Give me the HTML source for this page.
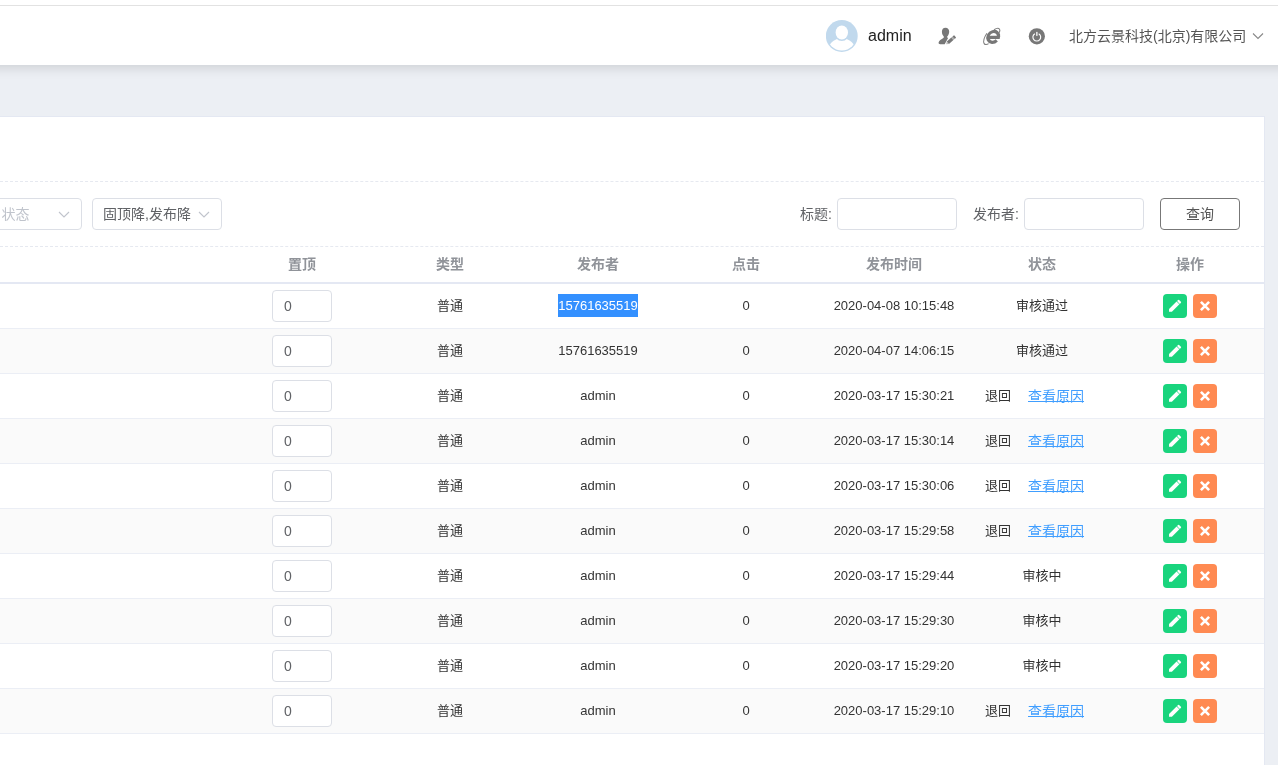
<!DOCTYPE html>
<html lang="zh-CN">
<head>
<meta charset="utf-8">
<title>信息管理</title>
<style>
*{box-sizing:border-box;margin:0;padding:0}
html,body{width:1278px;height:765px;overflow:hidden}
body{-webkit-font-smoothing:antialiased;position:relative;background:#eceff4;font-family:"Liberation Sans","Noto Sans CJK SC",sans-serif;color:#333;font-size:14px}
.top{will-change:transform;position:absolute;left:-40px;top:0;width:1358px;height:65px;padding-left:40px;background:#fff;box-shadow:0 2px 12px rgba(0,0,0,.15)}
.top>*{margin-left:40px}
.top .line{position:absolute;left:0;top:5px;width:1278px;height:1px;background:#e2e2e2}
.avatar{position:absolute;left:826.2px;top:20.2px}
.uname{position:absolute;left:868px;top:26px;font-size:16px;line-height:20px;color:#222}
.hic{position:absolute}
.corp{position:absolute;left:1069px;top:26px;font-size:14px;line-height:20px;color:#555;white-space:nowrap}
.chev{position:absolute}
.panel{will-change:transform;position:absolute;left:-1px;top:116px;width:1266px;height:660px;background:#fff;border:1px solid #e4e8f2}
.dash{position:absolute;left:0;width:1264px;height:0;border-top:1px dashed #e6e9f0}
.select{position:absolute;top:81px;height:32px;border:1px solid #dcdfe6;border-radius:4px;background:#fff;font-size:14px;line-height:30px;color:#606266;white-space:nowrap}
.lab{position:absolute;top:87px;font-size:14px;line-height:20px;color:#606266;white-space:nowrap}
.tin{position:absolute;top:81px;width:120px;height:32px;border:1px solid #dcdfe6;border-radius:4px;background:#fff}
.qbtn{position:absolute;left:1160px;top:81px;width:80px;height:32px;border:1px solid #777;border-radius:4px;background:#fff;font-size:14px;line-height:30px;text-align:center;color:#555}
table{position:absolute;left:0;top:130px;width:1264px;border-collapse:separate;border-spacing:0;table-layout:fixed;font-size:13px;color:#333}
th{height:37px;font-size:14px;font-weight:bold;color:#909399;text-align:center;border-bottom:2px solid #e4e8f3;padding-bottom:4px}
td{height:45px;text-align:center;border-bottom:1px solid #ebeef5;white-space:nowrap;vertical-align:middle}
tr.s td{background:#fafafa}
td.l{text-align:left;padding-left:17px}
.inp{display:inline-block;width:60px;height:32px;border:1px solid #dcdfe6;border-radius:4px;background:#fff;text-align:left;padding-left:11px;line-height:30px;font-size:14px;color:#606266;vertical-align:middle;position:relative;top:0px}
.sel{background:#3390ff;color:#fff;display:inline-block;height:23px;line-height:23px}
i{font-style:normal;position:relative;display:inline-block}
i.c{top:-2px}
i.n{top:-1px}
.bk{margin-right:17px}
.lk{color:#409eff;text-decoration:underline;font-size:14px;text-underline-offset:-0.4px;text-decoration-thickness:1px;text-decoration-skip-ink:none;position:relative;top:1px}
.b{display:inline-block;width:24px;height:24px;border-radius:4px;vertical-align:middle}
.b.g{background:#19d47d;margin-right:6px}
.b.o{background:#ff8a52}
.ic{display:block;width:24px;height:24px}
</style>
</head>
<body>
<div class="top">
  <div class="line"></div>
  <svg class="avatar" width="32" height="32" viewBox="0 0 32 32"><defs><clipPath id="avc"><circle cx="15.8" cy="16" r="14.5"/></clipPath></defs><circle cx="15.8" cy="16" r="15.9" fill="#c1d9ed"/><ellipse cx="15.8" cy="31.3" rx="13.9" ry="13" fill="#fff" clip-path="url(#avc)"/><ellipse cx="15.8" cy="12.5" rx="7.8" ry="8.6" fill="#c1d9ed"/><ellipse cx="15.8" cy="12.5" rx="6.2" ry="7" fill="#fff"/></svg>
  <div class="uname">admin</div>
  <svg class="hic" style="left:930px;top:22px" width="36" height="28" viewBox="0 0 36 28"><g fill="#777"><path d="M15.5 5.7 C17.9 5.7 19.3 7.4 19.2 9.8 C19.1 12 18.2 13.6 17.2 14.5 L17.2 15.4 L18.1 16.1 L14.7 22.3 L10.2 22.3 C9 22.3 8.5 21.6 8.6 20.6 C8.8 18.6 11.2 17.4 13.7 15.7 L13.8 14.5 C12.7 13.5 11.9 11.9 11.9 9.8 C11.9 7.3 13.2 5.7 15.5 5.7 Z"/><g transform="translate(16.1 22.3) rotate(-41.3)"><path d="M0 0 L2.4 -1.6 L2.4 1.6 Z" fill="#bdbdbd"/><rect x="2.4" y="-1.6" width="5.9" height="3.2"/><rect x="8.3" y="-1.6" width="1.6" height="3.2" fill="#a8a8a8"/><rect x="9.9" y="-1.6" width="2.1" height="3.2" rx="0.5"/></g></g></svg>
  <svg class="hic" style="left:974px;top:22px" width="36" height="28" viewBox="0 0 36 28"><path d="M12.9 11.2 C10.4 15 9 19.6 10.2 21.6 C11 22.9 13 22.7 14.6 21.6 M20 7.8 C22.3 6.3 24.6 5.9 25.5 7.2 C26.1 8 25.9 9.4 25.3 10.8" fill="none" stroke="#808080" stroke-width="1.1"/><g fill="none" stroke="#777" stroke-width="3.2" transform="translate(19.2 14.9) skewX(-8) translate(-19.2 -14.9)"><path d="M24.5 14.9 A5.3 5.4 0 1 0 23.26 18.37"/><path d="M14 15.4 L26 15.4"/></g></svg>
  <svg class="hic" style="left:1018px;top:22px" width="36" height="28" viewBox="0 0 36 28"><circle cx="18.85" cy="14.35" r="8.1" fill="#777"/><path d="M16.9 11.7 A3.9 3.9 0 1 0 20.7 11.7" stroke="#fff" stroke-width="1.15" fill="none"/><rect x="18.05" y="9.9" width="1.6" height="4" fill="#e4e4e4"/></svg>
  <div class="corp">北方云景科技(北京)有限公司</div>
  <svg class="chev" style="left:1252px;top:31px" width="12" height="10" viewBox="0 0 12 10"><path d="M1 2.5 L6 7.5 L11 2.5" stroke="#888" stroke-width="1.1" fill="none"/></svg>
</div>
<div class="panel">
  <div class="dash" style="top:64px"></div>
  <div class="dash" style="top:129px"></div>
  <div class="select" style="left:-60px;width:142px;color:#c0c4cc;padding-left:60.5px">状态<svg class="chev" style="left:117px;top:11px" width="12" height="10" viewBox="0 0 12 10"><path d="M1 2 L6 7 L11 2" stroke="#c0c4cc" stroke-width="1.1" fill="none"/></svg></div>
  <div class="select" style="left:92px;width:130px;padding-left:10px">固顶降,发布降<svg class="chev" style="left:105px;top:11px" width="12" height="10" viewBox="0 0 12 10"><path d="M1 2 L6 7 L11 2" stroke="#c0c4cc" stroke-width="1.1" fill="none"/></svg></div>
  <div class="lab" style="left:800px">标题:</div>
  <div class="tin" style="left:837px"></div>
  <div class="lab" style="left:973px">发布者:</div>
  <div class="tin" style="left:1024px"></div>
  <div class="qbtn">查询</div>
  <table>
    <colgroup><col style="width:228px"><col style="width:148px"><col style="width:148px"><col style="width:148px"><col style="width:148px"><col style="width:148px"><col style="width:148px"><col style="width:148px"></colgroup>
    <thead><tr><th></th><th>置顶</th><th>类型</th><th>发布者</th><th>点击</th><th>发布时间</th><th>状态</th><th>操作</th></tr></thead>
    <tbody>
<tr><td class="first"></td><td><span class="inp">0</span></td><td><i class="c">普通</i></td><td><i class="n"><span class="sel">15761635519</span></i></td><td><i class="n">0</i></td><td><i class="n">2020-04-08 10:15:48</i></td><td><i class="c">审核通过</i></td><td><span class="b g"><svg class="ic" viewBox="0 0 24 24"><g transform="translate(7.5 16.35) rotate(-45)" fill="#fff"><path d="M-2.12 0 L0 -2 L10.55 -2 L10.55 2 L0 2 Z"/><rect x="11.15" y="-2" width="2.3" height="4" rx="0.7"/></g></svg></span><span class="b o"><svg class="ic" viewBox="0 0 24 24"><path d="M7.9 7.9 L16.1 16.1 M16.1 7.9 L7.9 16.1" stroke="#fff" stroke-width="2.6" fill="none"/></svg></span></td></tr>
<tr class="s"><td class="first"></td><td><span class="inp">0</span></td><td><i class="c">普通</i></td><td><i class="n">15761635519</i></td><td><i class="n">0</i></td><td><i class="n">2020-04-07 14:06:15</i></td><td><i class="c">审核通过</i></td><td><span class="b g"><svg class="ic" viewBox="0 0 24 24"><g transform="translate(7.5 16.35) rotate(-45)" fill="#fff"><path d="M-2.12 0 L0 -2 L10.55 -2 L10.55 2 L0 2 Z"/><rect x="11.15" y="-2" width="2.3" height="4" rx="0.7"/></g></svg></span><span class="b o"><svg class="ic" viewBox="0 0 24 24"><path d="M7.9 7.9 L16.1 16.1 M16.1 7.9 L7.9 16.1" stroke="#fff" stroke-width="2.6" fill="none"/></svg></span></td></tr>
<tr><td class="first"></td><td><span class="inp">0</span></td><td><i class="c">普通</i></td><td><i class="n">admin</i></td><td><i class="n">0</i></td><td><i class="n">2020-03-17 15:30:21</i></td><td class="l"><i class="c"><span class="bk">退回</span><a class="lk">查看原因</a></i></td><td><span class="b g"><svg class="ic" viewBox="0 0 24 24"><g transform="translate(7.5 16.35) rotate(-45)" fill="#fff"><path d="M-2.12 0 L0 -2 L10.55 -2 L10.55 2 L0 2 Z"/><rect x="11.15" y="-2" width="2.3" height="4" rx="0.7"/></g></svg></span><span class="b o"><svg class="ic" viewBox="0 0 24 24"><path d="M7.9 7.9 L16.1 16.1 M16.1 7.9 L7.9 16.1" stroke="#fff" stroke-width="2.6" fill="none"/></svg></span></td></tr>
<tr class="s"><td class="first"></td><td><span class="inp">0</span></td><td><i class="c">普通</i></td><td><i class="n">admin</i></td><td><i class="n">0</i></td><td><i class="n">2020-03-17 15:30:14</i></td><td class="l"><i class="c"><span class="bk">退回</span><a class="lk">查看原因</a></i></td><td><span class="b g"><svg class="ic" viewBox="0 0 24 24"><g transform="translate(7.5 16.35) rotate(-45)" fill="#fff"><path d="M-2.12 0 L0 -2 L10.55 -2 L10.55 2 L0 2 Z"/><rect x="11.15" y="-2" width="2.3" height="4" rx="0.7"/></g></svg></span><span class="b o"><svg class="ic" viewBox="0 0 24 24"><path d="M7.9 7.9 L16.1 16.1 M16.1 7.9 L7.9 16.1" stroke="#fff" stroke-width="2.6" fill="none"/></svg></span></td></tr>
<tr><td class="first"></td><td><span class="inp">0</span></td><td><i class="c">普通</i></td><td><i class="n">admin</i></td><td><i class="n">0</i></td><td><i class="n">2020-03-17 15:30:06</i></td><td class="l"><i class="c"><span class="bk">退回</span><a class="lk">查看原因</a></i></td><td><span class="b g"><svg class="ic" viewBox="0 0 24 24"><g transform="translate(7.5 16.35) rotate(-45)" fill="#fff"><path d="M-2.12 0 L0 -2 L10.55 -2 L10.55 2 L0 2 Z"/><rect x="11.15" y="-2" width="2.3" height="4" rx="0.7"/></g></svg></span><span class="b o"><svg class="ic" viewBox="0 0 24 24"><path d="M7.9 7.9 L16.1 16.1 M16.1 7.9 L7.9 16.1" stroke="#fff" stroke-width="2.6" fill="none"/></svg></span></td></tr>
<tr class="s"><td class="first"></td><td><span class="inp">0</span></td><td><i class="c">普通</i></td><td><i class="n">admin</i></td><td><i class="n">0</i></td><td><i class="n">2020-03-17 15:29:58</i></td><td class="l"><i class="c"><span class="bk">退回</span><a class="lk">查看原因</a></i></td><td><span class="b g"><svg class="ic" viewBox="0 0 24 24"><g transform="translate(7.5 16.35) rotate(-45)" fill="#fff"><path d="M-2.12 0 L0 -2 L10.55 -2 L10.55 2 L0 2 Z"/><rect x="11.15" y="-2" width="2.3" height="4" rx="0.7"/></g></svg></span><span class="b o"><svg class="ic" viewBox="0 0 24 24"><path d="M7.9 7.9 L16.1 16.1 M16.1 7.9 L7.9 16.1" stroke="#fff" stroke-width="2.6" fill="none"/></svg></span></td></tr>
<tr><td class="first"></td><td><span class="inp">0</span></td><td><i class="c">普通</i></td><td><i class="n">admin</i></td><td><i class="n">0</i></td><td><i class="n">2020-03-17 15:29:44</i></td><td><i class="c">审核中</i></td><td><span class="b g"><svg class="ic" viewBox="0 0 24 24"><g transform="translate(7.5 16.35) rotate(-45)" fill="#fff"><path d="M-2.12 0 L0 -2 L10.55 -2 L10.55 2 L0 2 Z"/><rect x="11.15" y="-2" width="2.3" height="4" rx="0.7"/></g></svg></span><span class="b o"><svg class="ic" viewBox="0 0 24 24"><path d="M7.9 7.9 L16.1 16.1 M16.1 7.9 L7.9 16.1" stroke="#fff" stroke-width="2.6" fill="none"/></svg></span></td></tr>
<tr class="s"><td class="first"></td><td><span class="inp">0</span></td><td><i class="c">普通</i></td><td><i class="n">admin</i></td><td><i class="n">0</i></td><td><i class="n">2020-03-17 15:29:30</i></td><td><i class="c">审核中</i></td><td><span class="b g"><svg class="ic" viewBox="0 0 24 24"><g transform="translate(7.5 16.35) rotate(-45)" fill="#fff"><path d="M-2.12 0 L0 -2 L10.55 -2 L10.55 2 L0 2 Z"/><rect x="11.15" y="-2" width="2.3" height="4" rx="0.7"/></g></svg></span><span class="b o"><svg class="ic" viewBox="0 0 24 24"><path d="M7.9 7.9 L16.1 16.1 M16.1 7.9 L7.9 16.1" stroke="#fff" stroke-width="2.6" fill="none"/></svg></span></td></tr>
<tr><td class="first"></td><td><span class="inp">0</span></td><td><i class="c">普通</i></td><td><i class="n">admin</i></td><td><i class="n">0</i></td><td><i class="n">2020-03-17 15:29:20</i></td><td><i class="c">审核中</i></td><td><span class="b g"><svg class="ic" viewBox="0 0 24 24"><g transform="translate(7.5 16.35) rotate(-45)" fill="#fff"><path d="M-2.12 0 L0 -2 L10.55 -2 L10.55 2 L0 2 Z"/><rect x="11.15" y="-2" width="2.3" height="4" rx="0.7"/></g></svg></span><span class="b o"><svg class="ic" viewBox="0 0 24 24"><path d="M7.9 7.9 L16.1 16.1 M16.1 7.9 L7.9 16.1" stroke="#fff" stroke-width="2.6" fill="none"/></svg></span></td></tr>
<tr class="s"><td class="first"></td><td><span class="inp">0</span></td><td><i class="c">普通</i></td><td><i class="n">admin</i></td><td><i class="n">0</i></td><td><i class="n">2020-03-17 15:29:10</i></td><td class="l"><i class="c"><span class="bk">退回</span><a class="lk">查看原因</a></i></td><td><span class="b g"><svg class="ic" viewBox="0 0 24 24"><g transform="translate(7.5 16.35) rotate(-45)" fill="#fff"><path d="M-2.12 0 L0 -2 L10.55 -2 L10.55 2 L0 2 Z"/><rect x="11.15" y="-2" width="2.3" height="4" rx="0.7"/></g></svg></span><span class="b o"><svg class="ic" viewBox="0 0 24 24"><path d="M7.9 7.9 L16.1 16.1 M16.1 7.9 L7.9 16.1" stroke="#fff" stroke-width="2.6" fill="none"/></svg></span></td></tr>
    </tbody>
  </table>
</div>
</body>
</html>
